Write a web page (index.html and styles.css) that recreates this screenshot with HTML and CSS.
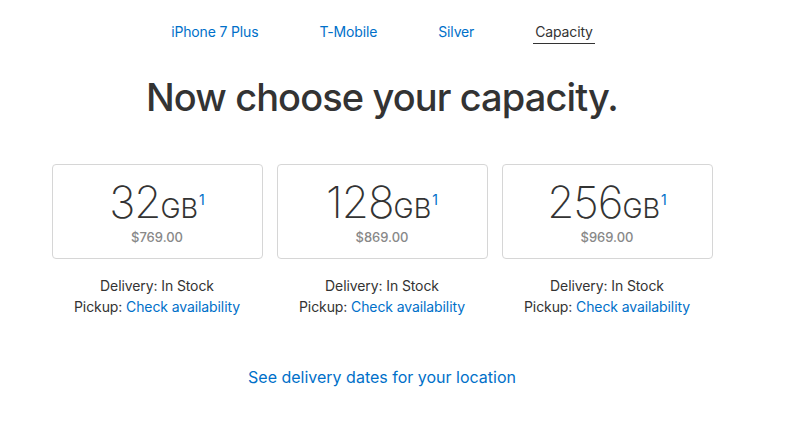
FILE: index.html
```html
<!DOCTYPE html>
<html lang="en">
<head>
<meta charset="utf-8">
<title>Choose capacity</title>
<link rel="stylesheet" href="styles.css">
</head>
<body>
<div class="page">
  <nav class="steps">
    <a class="step" href="#">iPhone 7 Plus</a>
    <a class="step" href="#">T-Mobile</a>
    <a class="step" href="#">Silver</a>
    <span class="step current">Capacity</span>
  </nav>
  <h1 class="title">Now choose your capacity.</h1>
  <div class="options">
    <div class="option">
      <div class="card">
        <div class="size"><span class="num">32</span><span class="unit">GB</span><sup class="fn">1</sup></div>
        <div class="price">$769.00</div>
      </div>
      <div class="avail">
        <div>Delivery: In Stock</div>
        <div>Pickup: <a href="#">Check availability</a></div>
      </div>
    </div>
    <div class="option">
      <div class="card">
        <div class="size"><span class="num">128</span><span class="unit">GB</span><sup class="fn">1</sup></div>
        <div class="price">$869.00</div>
      </div>
      <div class="avail">
        <div>Delivery: In Stock</div>
        <div>Pickup: <a href="#">Check availability</a></div>
      </div>
    </div>
    <div class="option">
      <div class="card">
        <div class="size"><span class="num">256</span><span class="unit">GB</span><sup class="fn">1</sup></div>
        <div class="price">$969.00</div>
      </div>
      <div class="avail">
        <div>Delivery: In Stock</div>
        <div>Pickup: <a href="#">Check availability</a></div>
      </div>
    </div>
  </div>
  <div class="more"><a href="#">See delivery dates for your location</a></div>
</div>
</body>
</html>
```

FILE: styles.css
```css
html, body {
  margin: 0;
  padding: 0;
  background: #fff;
}
body {
  font-family: Inter, "Liberation Sans", sans-serif;
  color: #333;
}
a {
  color: #0070c9;
  text-decoration: none;
}
.page {
  width: 764px;
  display: flex;
  flex-direction: column;
  align-items: center;
}
.steps {
  display: flex;
  gap: 57px;
  margin-top: 22px;
}
.step {
  font-size: 14px;
  line-height: 20px;
  letter-spacing: -0.15px;
  padding: 0 2px 1px;
  border-bottom: 1px solid transparent;
}
.step.current {
  color: #333;
  border-bottom-color: #333;
}
.title {
  margin: 30px 0 0;
  font-size: 38px;
  line-height: 46px;
  font-weight: 500;
  letter-spacing: -0.9px;
  color: #333;
}
.options {
  display: flex;
  gap: 14px;
  margin-top: 44px;
}
.option {
  width: 211px;
  display: flex;
  flex-direction: column;
  align-items: center;
}
.card {
  box-sizing: border-box;
  width: 211px;
  height: 95px;
  border: 1px solid #d6d6d6;
  border-radius: 4px;
  padding-top: 15px;
  display: flex;
  flex-direction: column;
  align-items: center;
}
.size {
  line-height: 44px;
  height: 44px;
  white-space: nowrap;
}
.num {
  font-size: 44px;
  font-weight: 200;
  letter-spacing: -1px;
}
.unit {
  font-size: 27px;
  font-weight: 300;
}
.fn {
  font-size: 14px;
  color: #0070c9;
  vertical-align: 0;
  position: relative;
  top: -13px;
  margin-left: 1px;
}
.price {
  margin-top: 4px;
  font-size: 13px;
  line-height: 18px;
  font-weight: 500;
  color: #888;
}
.avail {
  margin-top: 16px;
  text-align: center;
  font-size: 14px;
  line-height: 21px;
  letter-spacing: -0.1px;
}
.more {
  margin-top: 48px;
  font-size: 16px;
  line-height: 24px;
}
```
